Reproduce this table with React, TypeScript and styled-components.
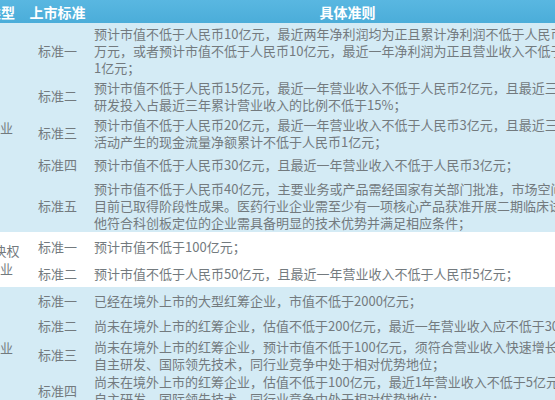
import React from 'react';
import styled, { createGlobalStyle } from 'styled-components';

type Rule = { name: string; height: number; lines: string[] };
type Group = { label: string[]; shaded: boolean; rules: Rule[] };

const groups: Group[] = [
  {
    label: ['一般企业'],
    shaded: true,
    rules: [
      {
        name: '标准一',
        height: 54,
        lines: [
          '预计市值不低于人民币10亿元，最近两年净利润均为正且累计净利润不低于人民币5000',
          '万元，或者预计市值不低于人民币10亿元，最近一年净利润为正且营业收入不低于人民币',
          '1亿元；',
        ],
      },
      {
        name: '标准二',
        height: 37,
        lines: [
          '预计市值不低于人民币15亿元，最近一年营业收入不低于人民币2亿元，且最近三年累计',
          '研发投入占最近三年累计营业收入的比例不低于15%；',
        ],
      },
      {
        name: '标准三',
        height: 37,
        lines: [
          '预计市值不低于人民币20亿元，最近一年营业收入不低于人民币3亿元，且最近三年经营',
          '活动产生的现金流量净额累计不低于人民币1亿元；',
        ],
      },
      {
        name: '标准四',
        height: 27,
        lines: ['预计市值不低于人民币30亿元，且最近一年营业收入不低于人民币3亿元；'],
      },
      {
        name: '标准五',
        height: 54,
        lines: [
          '预计市值不低于人民币40亿元，主要业务或产品需经国家有关部门批准，市场空间大，',
          '目前已取得阶段性成果。医药行业企业需至少有一项核心产品获准开展二期临床试验，其',
          '他符合科创板定位的企业需具备明显的技术优势并满足相应条件；',
        ],
      },
    ],
  },
  {
    label: ['存在表决权', '差异企业'],
    shaded: false,
    rules: [
      { name: '标准一', height: 28, lines: ['预计市值不低于100亿元；'] },
      {
        name: '标准二',
        height: 27,
        lines: ['预计市值不低于人民币50亿元，且最近一年营业收入不低于人民币5亿元；'],
      },
    ],
  },
  {
    label: ['红筹企业'],
    shaded: true,
    rules: [
      {
        name: '标准一',
        height: 27,
        lines: ['已经在境外上市的大型红筹企业，市值不低于2000亿元；'],
      },
      {
        name: '标准二',
        height: 23,
        lines: ['尚未在境外上市的红筹企业，估值不低于200亿元，最近一年营业收入应不低于30亿元；'],
      },
      {
        name: '标准三',
        height: 35,
        lines: [
          '尚未在境外上市的红筹企业，预计市值不低于100亿元，须符合营业收入快速增长，拥有',
          '自主研发、国际领先技术，同行业竞争中处于相对优势地位；',
        ],
      },
      {
        name: '标准四',
        height: 36,
        lines: [
          '尚未在境外上市的红筹企业，估值不低于100亿元，最近1年营业收入不低于5亿元，拥有',
          '自主研发、国际领先技术，同行业竞争中处于相对优势地位；',
        ],
      },
    ],
  },
];

export default function App() {
  return (
    <>
      <GlobalStyle />
      <Table>
        <HeaderRow>
          <HeadCell $width={80}>企业类型</HeadCell>
          <HeadCell $width={61}>上市标准</HeadCell>
          <HeadCell $width={519}>具体准则</HeadCell>
        </HeaderRow>
        {groups.map((group, gi) => (
          <GroupBlock key={gi} $shaded={group.shaded}>
            <GroupLabel>
              {group.label.map((l, li) => (
                <span key={li}>{l}</span>
              ))}
            </GroupLabel>
            <RuleList>
              {group.rules.map((rule, ri) => (
                <RuleRow key={ri} $height={rule.height}>
                  <RuleName>{rule.name}</RuleName>
                  <RuleText>
                    {rule.lines.map((line, li) => (
                      <Line key={li}>{line}</Line>
                    ))}
                  </RuleText>
                </RuleRow>
              ))}
            </RuleList>
          </GroupBlock>
        ))}
      </Table>
    </>
  );
}

const GlobalStyle = createGlobalStyle`
  html, body {
    margin: 0;
    padding: 0;
    background: #ffffff;
    overflow: hidden;
  }
  body {
    width: 555px;
    height: 400px;
    font-family: "Noto Sans CJK SC", "Noto Sans", sans-serif;
  }
`;

const Table = styled.div`
  display: flex;
  flex-direction: column;
  width: 660px;
  margin-left: -53px;
  font-size: 13px;
  color: #737a7e;
`;

const HeaderRow = styled.div`
  display: flex;
  height: 23px;
  background: linear-gradient(#59b7e1, #4badd9);
`;

const HeadCell = styled.div<{ $width: number }>`
  width: ${(p) => p.$width}px;
  flex-shrink: 0;
  display: flex;
  align-items: center;
  justify-content: center;
  color: #ffffff;
  font-weight: bold;
  font-size: 14px;
`;

const GroupBlock = styled.div<{ $shaded: boolean }>`
  display: flex;
  background: ${(p) => (p.$shaded ? '#d4ebf5' : '#ffffff')};
`;

const GroupLabel = styled.div`
  width: 80px;
  flex-shrink: 0;
  display: flex;
  flex-direction: column;
  align-items: center;
  justify-content: center;
  line-height: 18px;
`;

const RuleList = styled.div`
  display: flex;
  flex-direction: column;
`;

const RuleRow = styled.div<{ $height: number }>`
  display: flex;
  align-items: center;
  height: ${(p) => p.$height}px;
`;

const RuleName = styled.div`
  width: 61px;
  flex-shrink: 0;
  text-align: center;
`;

const RuleText = styled.div`
  width: 519px;
  flex-shrink: 0;
  padding-left: 6px;
  box-sizing: border-box;
  line-height: 17px;
`;

const Line = styled.div`
  white-space: nowrap;
`;
